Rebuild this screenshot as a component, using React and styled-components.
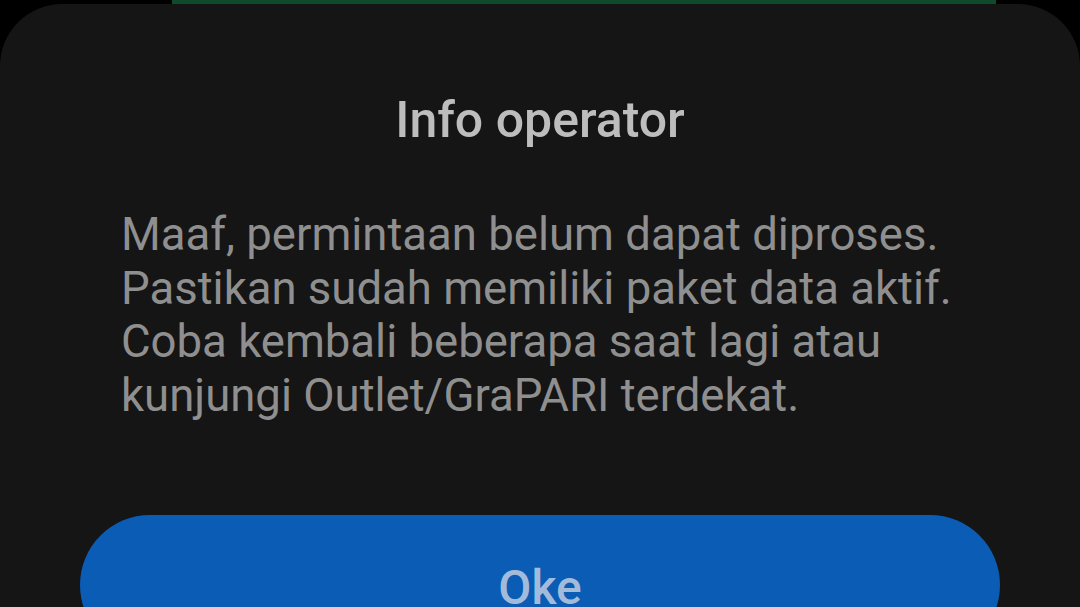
import React from "react";
import styled, { createGlobalStyle } from "styled-components";

const GlobalStyle = createGlobalStyle`
  html, body {
    margin: 0;
    padding: 0;
    background: #000000;
    overflow: hidden;
  }
  body {
    font-family: Roboto, "Noto Sans", sans-serif;
  }
`;

const Screen = styled.div`
  width: 1080px;
  height: 607px;
  background: #000000;
  display: flex;
  flex-direction: column;
  overflow: hidden;
`;

const BehindBar = styled.div`
  height: 4px;
  margin-left: 172px;
  width: 824px;
  background: #0f4a2b;
  flex-shrink: 0;
`;

const Dialog = styled.div`
  flex: 1;
  background: #151515;
  border-radius: 62px 62px 0 0;
  display: flex;
  flex-direction: column;
  align-items: center;
  padding: 0 80px;
`;

const Title = styled.h1`
  margin: 86px 0 0;
  font-size: 50px;
  font-weight: 500;
  line-height: 60px;
  color: #bdbdbd;
  letter-spacing: 0;
  flex-shrink: 0;
`;

const Message = styled.p`
  align-self: stretch;
  margin: 58px 0 0;
  padding-left: 41px;
  font-size: 45.5px;
  font-weight: 400;
  line-height: 53.5px;
  color: #8f8f8f;
  white-space: nowrap;
  flex-shrink: 0;
`;

const OkButton = styled.button`
  align-self: stretch;
  margin-top: 93px;
  height: 140px;
  border: none;
  border-radius: 70px;
  background: #0b5cb5;
  color: #a3bbda;
  font-family: Roboto, "Noto Sans", sans-serif;
  font-size: 48px;
  font-weight: 500;
  line-height: 60px;
  display: flex;
  justify-content: center;
  align-items: flex-start;
  padding: 43px 0 0;
  flex-shrink: 0;
`;

const App = () => {
  return (
    <Screen>
      <GlobalStyle />
      <BehindBar />
      <Dialog>
        <Title>Info operator</Title>
        <Message>
          Maaf, permintaan belum dapat diproses.
          <br />
          Pastikan sudah memiliki paket data aktif.
          <br />
          Coba kembali beberapa saat lagi atau
          <br />
          kunjungi Outlet/GraPARI terdekat.
        </Message>
        <OkButton>Oke</OkButton>
      </Dialog>
    </Screen>
  );
};

export default App;
